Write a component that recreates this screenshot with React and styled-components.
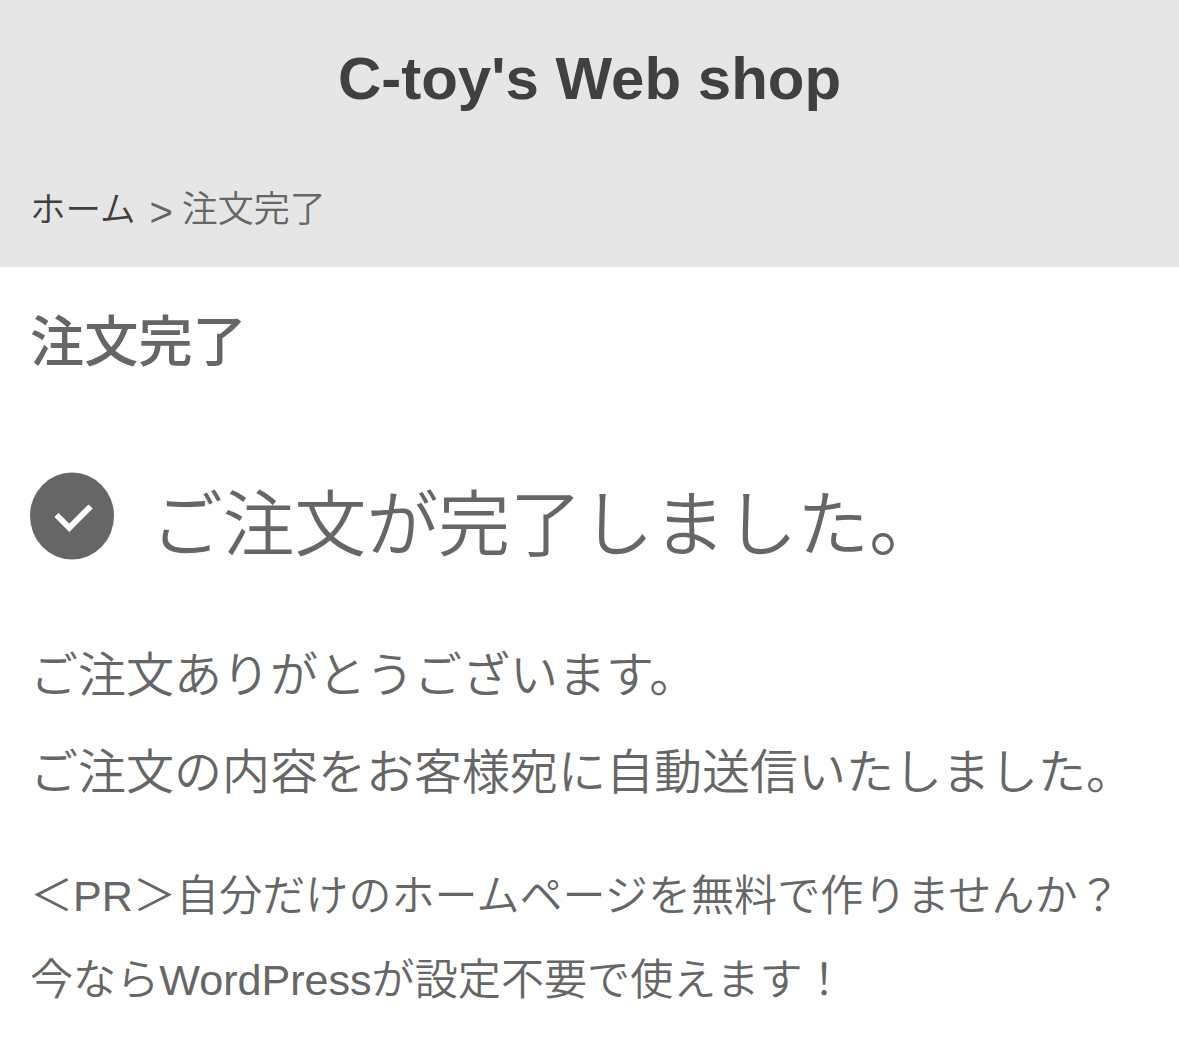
import React from 'react'
import styled, { createGlobalStyle } from 'styled-components';

function App() {
    return (
        <PageStyled>
            <GlobalStyle />
            <HeaderStyled>
              <h1>C-toy's Web shop</h1>
              <BreadcrumbStyled>
                <a>ホーム</a>
                <span className="separator">&gt;</span>
                <span>注文完了</span>
              </BreadcrumbStyled>
            </HeaderStyled>

            <MainStyled>
              <h2>注文完了</h2>

              <CompleteStyled>
                <CheckIcon />
                <p>ご注文が完了しました。</p>
              </CompleteStyled>

              <MessageStyled>
                <p>ご注文ありがとうございます。</p>
                <p>ご注文の内容をお客様宛に自動送信いたしました。</p>
              </MessageStyled>

              <PromotionStyled>
                <p>＜PR＞自分だけのホームページを無料で作りませんか？</p>
                <p>今ならWordPressが設定不要で使えます！</p>
              </PromotionStyled>
            </MainStyled>
        </PageStyled>
    )
}

function CheckIcon() {
    return (
        <CheckIconStyled viewBox="0 0 84 88">
            <ellipse cx="42" cy="44" rx="42" ry="43.5" />
            <path d="M26.500 43 L39.300 55.800 L60.600 34.500" />
        </CheckIconStyled>
    )
}

const GlobalStyle = createGlobalStyle`
  *{
      margin: 0;
      padding: 0;
      box-sizing: border-box;
  }

  body{
      background: #fff;
      color: #666;
      font-family: "Liberation Sans", "Noto Sans CJK JP", sans-serif;
      font-weight: 350;
      overflow: hidden;
  }
`;

const PageStyled = styled.div`
  height: 1043px;
  overflow: hidden;
`;

const HeaderStyled = styled.header`
  height: 267px;
  padding-top: 44px;
  background: #e6e6e6;

  h1{
      font-size: 60px;
      line-height: 70px;
      text-align: center;
      color: #404040;
  }
`;

const BreadcrumbStyled = styled.nav`
  display: flex;
  align-items: center;
  height: 50px;
  padding-left: 30px;
  margin-top: 67px;
  font-size: 36px;
  white-space: nowrap;

  a{
      color: #404040;
      font-size: 35.5px;
  }

  .separator{
      margin: 0 9px 0 14px;
      padding-top: 13px;
      font-size: 40px;
  }
`;

const MainStyled = styled.main`
  padding: 42px 30px 0;

  h2{
      font-size: 54.2px;
      font-weight: 500;
      line-height: 66px;
  }
`;

const CompleteStyled = styled.div`
  display: flex;
  align-items: center;
  height: 100px;
  margin-top: 91px;

  p{
      margin-left: 37px;
      padding-top: 18px;
      font-size: 71.8px;
      line-height: 100px;
      white-space: nowrap;
  }
`;

const CheckIconStyled = styled.svg`
  flex: none;
  width: 84px;
  height: 88px;

  ellipse{
      fill: #666;
  }

  path{
      fill: none;
      stroke: #fff;
      stroke-width: 6;
  }
`;

const MessageStyled = styled.div`
  margin-top: 61px;
  font-size: 48px;
  line-height: 97px;
  white-space: nowrap;
`;

const PromotionStyled = styled.div`
  margin-top: 33px;
  font-size: 43.1px;
  line-height: 84px;
  white-space: nowrap;
`;

export default App
